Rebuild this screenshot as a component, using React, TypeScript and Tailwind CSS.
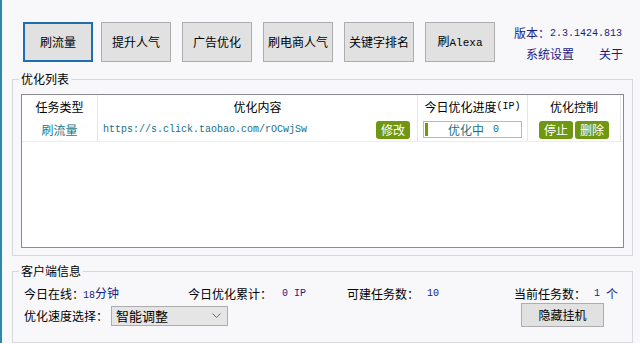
import React from "react";

const CJK = "font-['Microsoft_YaHei','Noto_Sans_CJK_SC',sans-serif]";
const MONO = "font-['Liberation_Mono','Noto_Sans_CJK_SC',monospace]";

function TopBtn({ label, active, ml }: { label: React.ReactNode; active?: boolean; ml: string }) {
  return (
    <div
      className={`${ml} w-[70px] h-[40px] shrink-0 flex items-center justify-center bg-[#e1e1e1] text-[12px] text-black ${
        active ? "border-2 border-[#1f6fb0]" : "border border-[#adadad]"
      }`}
    >
      {label}
    </div>
  );
}

function GreenBtn({ label }: { label: string }) {
  return (
    <div className="w-[34px] h-[18px] shrink-0 rounded-[3px] bg-[#6f9712] text-white text-[12px] leading-[18px] text-center">
      {label}
    </div>
  );
}

export default function App() {
  return (
    <div className={`w-[640px] h-[343px] bg-[#f8f8fb] border-l-2 border-[#2a8aa8] overflow-hidden flex flex-col whitespace-nowrap ${CJK} text-[12px] text-black`}>
      {/* top row */}
      <div className="h-[62px] pt-[22px] flex">
        <TopBtn label="刷流量" active ml="ml-[21px]" />
        <TopBtn label="提升人气" ml="ml-[8px]" />
        <TopBtn label="广告优化" ml="ml-[11px]" />
        <TopBtn label="刷电商人气" ml="ml-[11px]" />
        <TopBtn label="关键字排名" ml="ml-[11px]" />
        <TopBtn label={<span>刷<span className={`${MONO} text-[11px]`}>Alexa</span></span>} ml="ml-[11px]" />
        <div className="ml-[19px] flex flex-col text-[#1a1a86]">
          <div className="h-[17px] flex items-end leading-none">
            <span className="text-[12px]">版本：</span>
            <span className={`${MONO} text-[10px]`}>2.3.1424.813</span>
          </div>
          <div className="mt-[9px] flex leading-none">
            <span className="ml-[12px]">系统设置</span>
            <span className="ml-[25px]">关于</span>
          </div>
        </div>
      </div>

      {/* group 1 */}
      <div className="relative ml-[10px] mt-[17px] w-[621px] h-[177px] border border-[#d8d8dc]">
        <div className="absolute left-[6px] -top-[8px] px-[2px] bg-[#f8f8fb] leading-[14px]">优化列表</div>
        <div className="ml-[8px] mt-[14px] w-[603px] h-[154px] border border-[#8a8a8f] bg-white flex flex-col">
          {/* header */}
          <div className="h-[23px] flex items-center">
            <div className="w-[76px] h-full border-r border-[#e6e6e6] flex items-center justify-center">任务类型</div>
            <div className="w-[320px] h-full border-r border-[#e6e6e6] flex items-center justify-center">优化内容</div>
            <div className="w-[110px] h-full border-r border-[#e6e6e6] flex items-center justify-center">
              今日优化进度<span className={`${MONO} text-[10px]`}>(IP)</span>
            </div>
            <div className="w-[93px] h-full border-r border-[#e6e6e6] flex items-center justify-center">优化控制</div>
          </div>
          {/* row */}
          <div className="h-[24px] flex border-b border-[#ededed]">
            <div className="w-[76px] h-full border-r border-[#e6e6e6] flex items-center justify-center text-[#1b7a8a]">刷流量</div>
            <div className="w-[320px] h-full border-r border-[#e6e6e6] flex items-center justify-between pl-[5px] pr-[7px]">
              <span className={`${MONO} text-[10px] text-[#1b6f80]`}>https://s.click.taobao.com/rOCwjSw</span>
              <GreenBtn label="修改" />
            </div>
            <div className="w-[110px] h-full border-r border-[#e6e6e6] flex items-center pl-[5px]">
              <div className="w-[99px] h-[17px] border border-[#b8b8b8] flex items-stretch">
                <div className="w-[3px] shrink-0 bg-[#6f9712] my-[1px] ml-[1px]" />
                <div className="flex-1 pr-[2px] flex items-center justify-center text-[#1b6f80] leading-none">
                  优化中<span className={`${MONO} text-[10px] ml-[9px]`}>0</span>
                </div>
              </div>
            </div>
            <div className="w-[93px] h-full border-r border-[#e6e6e6] flex items-center pl-[11px] gap-[2px]">
              <GreenBtn label="停止" />
              <GreenBtn label="删除" />
            </div>
          </div>
        </div>
      </div>

      {/* group 2 */}
      <div className="relative ml-[10px] mt-[15px] w-[621px] h-[72px] border border-[#d8d8dc]">
        <div className="absolute left-[6px] -top-[8px] px-[2px] bg-[#f8f8fb] leading-[14px]">客户端信息</div>
        <div className="pl-[11px] pt-[14px] flex items-center h-[30px] leading-none">
          <span className="w-[59px] shrink-0">今日在线：</span>
          <span className="w-[105px] shrink-0 text-[#1a1a86]"><span className={`${MONO} text-[10px]`}>18</span>分钟</span>
          <span className="w-[94px] shrink-0">今日优化累计：</span>
          <span className={`w-[65px] shrink-0 text-[#1a1a86] ${MONO} text-[10px]`}>0 IP</span>
          <span className="w-[80px] shrink-0">可建任务数：</span>
          <span className={`w-[87px] shrink-0 text-[#1a1a86] ${MONO} text-[10px]`}>10</span>
          <span className="w-[80px] shrink-0">当前任务数：</span>
          <span className="shrink-0 flex items-center text-[#1a1a86]">
            <span className={`${MONO} text-[10px]`}>1</span>
            <span className="ml-[6px]">个</span>
          </span>
        </div>
        <div className="pl-[11px] mt-[2px] flex items-center">
          <span className="w-[87px] shrink-0">优化速度选择：</span>
          <div className="w-[117px] h-[20px] shrink-0 bg-[#e5e5e5] border border-[#adadad] flex items-center justify-between pl-[4px] pr-[6px] text-[13px]">
            <span>智能调整</span>
            <svg width="9" height="6" viewBox="0 0 9 6" fill="none">
              <path d="M0.5 0.5L4.5 4.5L8.5 0.5" stroke="#666" strokeWidth="1" />
            </svg>
          </div>
          <div className="ml-[293px] -mt-[1px] w-[83px] h-[24px] shrink-0 bg-[#e1e1e1] border border-[#adadad] flex items-center justify-center">
            隐藏挂机
          </div>
        </div>
      </div>
    </div>
  );
}
